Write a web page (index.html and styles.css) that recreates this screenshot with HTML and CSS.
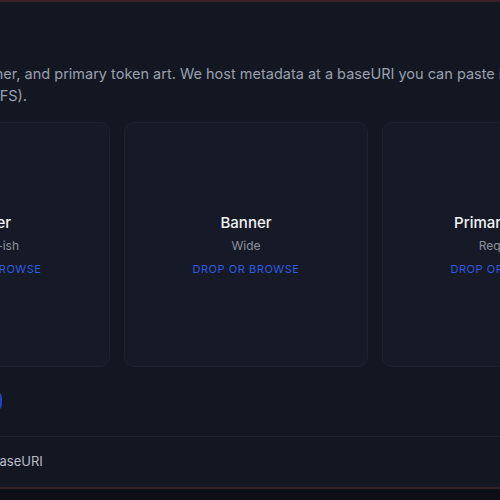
FILE: index.html
```html
<html>
<head>
    <link rel="stylesheet" href="styles.css">
</head>
<body>
    <section class="panel">
        <div class="content">
            <h2 class="heading">Artwork</h2>
            <p class="intro">Upload avatar, banner, and primary token art. We host metadata at a baseURI you can paste into your contract, or pin it yourself (IPFS).</p>
            <div class="slots">
                <div class="slot">
                    <div class="slotTitle">Poster</div>
                    <div class="slotHint">Square-ish</div>
                    <a class="slotAction">Drop or browse</a>
                </div>
                <div class="slot">
                    <div class="slotTitle">Banner</div>
                    <div class="slotHint">Wide</div>
                    <a class="slotAction">Drop or browse</a>
                </div>
                <div class="slot">
                    <div class="slotTitle">Primary token</div>
                    <div class="slotHint">Required</div>
                    <a class="slotAction">Drop or browse</a>
                </div>
            </div>
            <div class="actions">
                <button class="primaryBtn">Publish artwork</button>
            </div>
            <div class="footer">
                <span class="footerText">Copy the generated baseURI</span>
            </div>
        </div>
    </section>
</body>
</html>
```

FILE: styles.css
```css
body {
    margin: 0;
    background-color: #0c0f16;
    font-family: "Inter", "Liberation Sans", sans-serif;
}

.panel {
    background-color: #131722;
    border-top: 2px solid #3a1f25;
    border-bottom: 2px solid #3a1f25;
    overflow: hidden;
}

.content {
    width: 760px;
    margin-left: -134px;
    padding-top: 24px;
}

.heading {
    margin: 0 0 9px 0;
    font-size: 20px;
    line-height: 28px;
    font-weight: 600;
    color: #eef0f4;
}

.intro {
    margin: 0;
    font-size: 14.5px;
    line-height: 22px;
    color: #9aa0ad;
}

.slots {
    display: grid;
    grid-template-columns: repeat(3, 1fr);
    gap: 14px;
    margin-top: 15px;
}

.slot {
    height: 245px;
    box-sizing: border-box;
    background-color: #151a26;
    border: 1px solid #1c2230;
    border-radius: 10px;
    display: flex;
    flex-direction: column;
    align-items: center;
    justify-content: center;
}

.slotTitle {
    font-size: 15px;
    line-height: 20px;
    font-weight: 500;
    color: #f1f3f6;
}

.slotHint {
    margin-top: 5px;
    font-size: 12px;
    line-height: 16px;
    color: #8b919d;
}

.slotAction {
    margin-top: 8px;
    font-size: 11px;
    line-height: 14px;
    letter-spacing: 0.05em;
    text-transform: uppercase;
    color: #2f5be0;
}

.actions {
    margin-top: 23px;
}

.primaryBtn {
    width: 136px;
    height: 22px;
    border: none;
    border-radius: 8px;
    background-color: #2443c4;
    color: #ffffff;
    font-family: inherit;
    font-size: 12px;
    font-weight: 600;
}

.footer {
    margin-top: 24px;
    border-top: 1px solid #1f2533;
    padding: 14px 0 16px 0;
}

.footerText {
    display: block;
    font-size: 13px;
    line-height: 20px;
    color: #b9bdc6;
}
```
